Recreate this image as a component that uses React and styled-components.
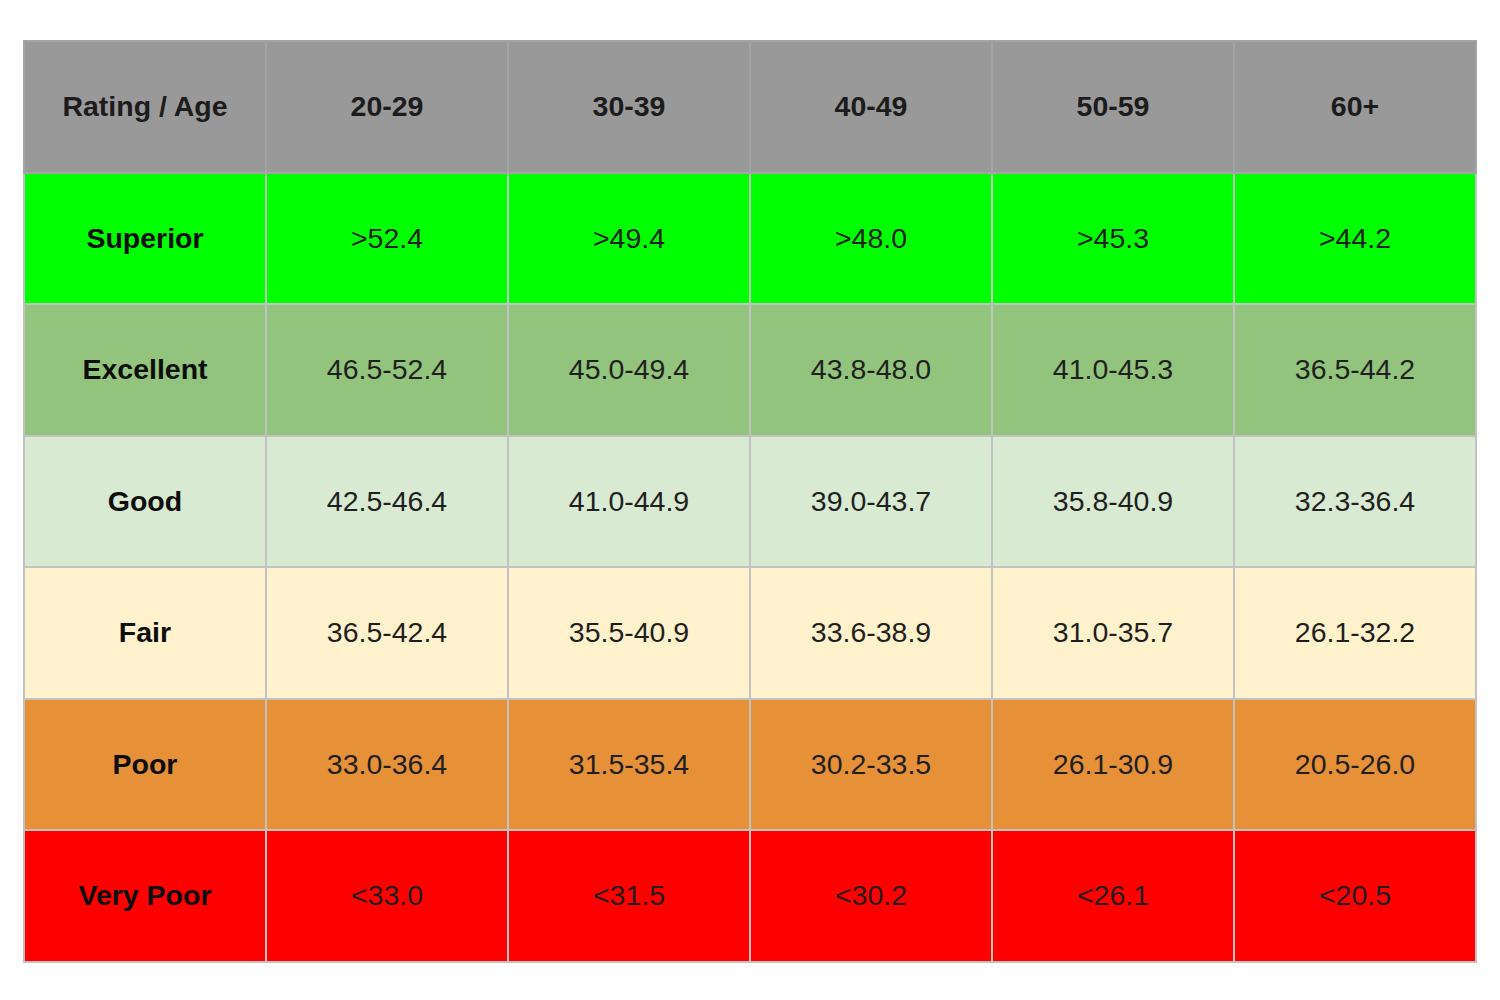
import React from "react";
import styled, { createGlobalStyle } from "styled-components";

const GlobalStyle = createGlobalStyle`
  html, body {
    margin: 0;
    padding: 0;
    background: #fff;
    font-family: "Liberation Sans", Arial, sans-serif;
  }
`;

const Page = styled.div`
  padding: 40px 0 0 23px;
`;

const Table = styled.table`
  width: 1454px;
  table-layout: fixed;
  border-collapse: collapse;
  font-family: "Liberation Sans", Arial, sans-serif;
  font-size: 28.5px;
`;

const Row = styled.tr`
  height: 131.5px;
  background: ${(p) => p.bg};
`;

const Cell = styled.td`
  border: 2px solid #c2c2c2;
  text-align: center;
  vertical-align: middle;
  padding: 0;
  color: ${(p) => (p.label ? "#0d0d0d" : "#1f1f1f")};
  font-weight: ${(p) => (p.label ? 700 : 400)};
`;

const HeadCell = styled.th`
  border: 2px solid #a4a4a4;
  text-align: center;
  vertical-align: middle;
  padding: 0;
  color: #1c1c1c;
  font-weight: 700;
`;

const ages = ["20-29", "30-39", "40-49", "50-59", "60+"];

const rows = [
  { label: "Superior", bg: "#00ff00", values: [">52.4", ">49.4", ">48.0", ">45.3", ">44.2"] },
  { label: "Excellent", bg: "#93c47d", values: ["46.5-52.4", "45.0-49.4", "43.8-48.0", "41.0-45.3", "36.5-44.2"] },
  { label: "Good", bg: "#d9ead3", values: ["42.5-46.4", "41.0-44.9", "39.0-43.7", "35.8-40.9", "32.3-36.4"] },
  { label: "Fair", bg: "#fff2cc", values: ["36.5-42.4", "35.5-40.9", "33.6-38.9", "31.0-35.7", "26.1-32.2"] },
  { label: "Poor", bg: "#e69138", values: ["33.0-36.4", "31.5-35.4", "30.2-33.5", "26.1-30.9", "20.5-26.0"] },
  { label: "Very Poor", bg: "#ff0000", values: ["<33.0", "<31.5", "<30.2", "<26.1", "<20.5"] },
];

export default function App() {
  return (
    <>
      <GlobalStyle />
      <Page>
        <Table>
          <thead>
            <Row bg="#999999">
              <HeadCell>Rating / Age</HeadCell>
              {ages.map((a) => (
                <HeadCell key={a}>{a}</HeadCell>
              ))}
            </Row>
          </thead>
          <tbody>
            {rows.map((r) => (
              <Row key={r.label} bg={r.bg}>
                <Cell label="1">{r.label}</Cell>
                {r.values.map((v, i) => (
                  <Cell key={i}>{v}</Cell>
                ))}
              </Row>
            ))}
          </tbody>
        </Table>
      </Page>
    </>
  );
}
